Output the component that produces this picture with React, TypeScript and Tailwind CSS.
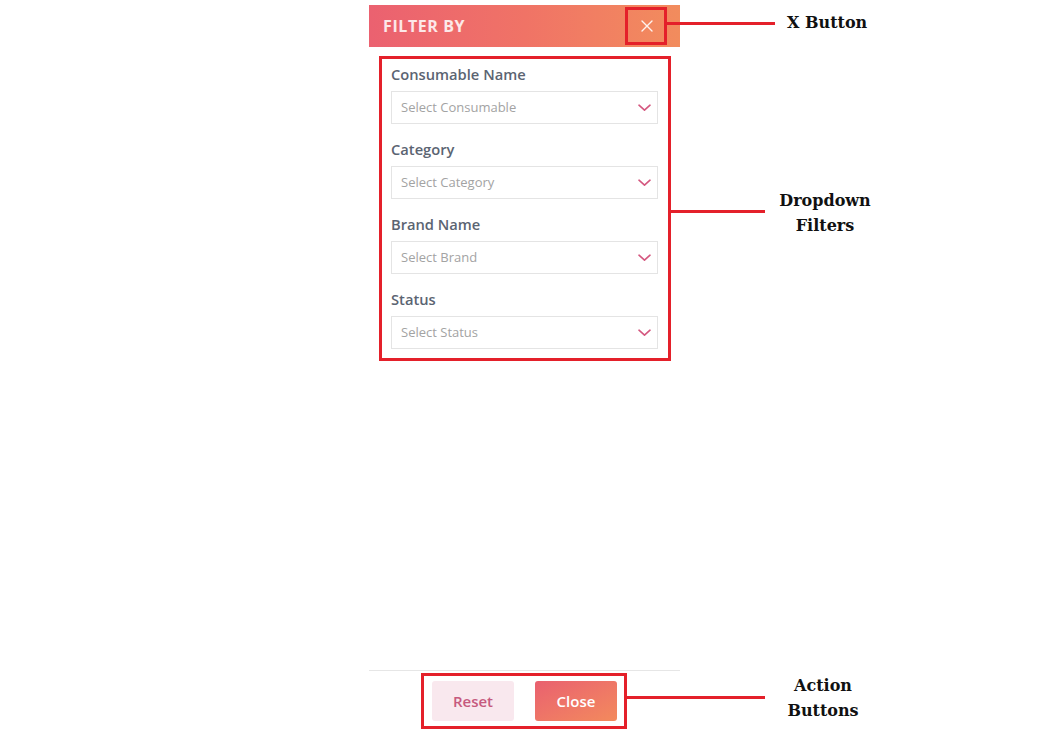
import React from 'react';

const filters = [
  { label: 'Consumable Name', placeholder: 'Select Consumable' },
  { label: 'Category', placeholder: 'Select Category' },
  { label: 'Brand Name', placeholder: 'Select Brand' },
  { label: 'Status', placeholder: 'Select Status' },
];

const Chevron = () => (
  <svg width="13" height="8" viewBox="0 0 13 8" fill="none">
    <path d="M1 1.2L6.5 6.2L12 1.2" stroke="#d4577f" strokeWidth="1.6" strokeLinecap="round" strokeLinejoin="round" />
  </svg>
);

const SelectBox = ({ label, placeholder }: { label: string; placeholder: string }) => (
  <div className="flex flex-col">
    <label className="h-[20px] text-[14.7px] leading-[20px] font-semibold text-[#5b6472]">{label}</label>
    <button className="mt-[7px] h-[33px] flex items-center justify-between border border-[#e4e4e4] bg-white pl-[9px] pr-[6px] text-left">
      <span className="text-[13px] text-[#a3a3a3]">{placeholder}</span>
      <Chevron />
    </button>
  </div>
);

const serif = { fontFamily: '"DejaVu Serif", serif' };

export default function App() {
  return (
    <div className="relative w-[1049px] h-[736px] bg-white overflow-hidden" style={{ fontFamily: '"Open Sans", "Noto Sans", sans-serif' }}>
      {/* Filter panel */}
      <div className="ml-[369px] w-[311px] h-full flex flex-col pt-[5px]">
        <div className="h-[42px] flex items-center justify-between pl-[14px] pr-[27px] bg-linear-to-r from-[#eb6170] via-[#f07366] to-[#f28c5d]">
          <span className="text-[16px] font-bold tracking-[0.6px] text-white/85">FILTER BY</span>
          <svg width="12" height="12" viewBox="0 0 12 12" fill="none">
            <path d="M1 1L11 11M11 1L1 11" stroke="white" strokeOpacity="0.9" strokeWidth="1.4" strokeLinecap="round" />
          </svg>
        </div>

        <div className="flex-1 flex flex-col gap-[15px] px-[22px] pt-[17px]">
          {filters.map((f) => (
            <SelectBox key={f.label} label={f.label} placeholder={f.placeholder} />
          ))}
        </div>

        <div className="border-t border-[#e6e6e6] h-[66px] flex justify-center gap-[21px] pt-[10px]">
          <button className="w-[82px] h-[40px] rounded-[3px] bg-[#f9e8ee] text-[15px] font-semibold text-[#c65a7e]">Reset</button>
          <button className="w-[82px] h-[40px] rounded-[3px] bg-linear-to-br from-[#e9606f] to-[#f38a5c] text-[15px] font-semibold text-white">Close</button>
        </div>
      </div>

      {/* Annotations */}
      <div className="absolute left-[625px] top-[7px] w-[42px] h-[38px] border-[3px] border-[#e4202a]" />
      <div className="absolute left-[667px] top-[22px] w-[108px] h-[3px] bg-[#e4202a]" />
      <div className="absolute left-[787px] top-[11px] text-[16px] leading-[24px] font-bold text-[#111]" style={serif}>X Button</div>

      <div className="absolute left-[379px] top-[56px] w-[292px] h-[305px] border-[3px] border-[#e4202a]" />
      <div className="absolute left-[671px] top-[210px] w-[94px] h-[3px] bg-[#e4202a]" />
      <div className="absolute left-[775px] top-[188px] w-[100px] text-center text-[16px] leading-[25px] font-bold text-[#111]" style={serif}>
        Dropdown<br />Filters
      </div>

      <div className="absolute left-[421px] top-[673px] w-[206px] h-[56px] border-[3px] border-[#e4202a]" />
      <div className="absolute left-[627px] top-[696px] w-[138px] h-[3px] bg-[#e4202a]" />
      <div className="absolute left-[773px] top-[673px] w-[100px] text-center text-[16px] leading-[25px] font-bold text-[#111]" style={serif}>
        Action<br />Buttons
      </div>
    </div>
  );
}
